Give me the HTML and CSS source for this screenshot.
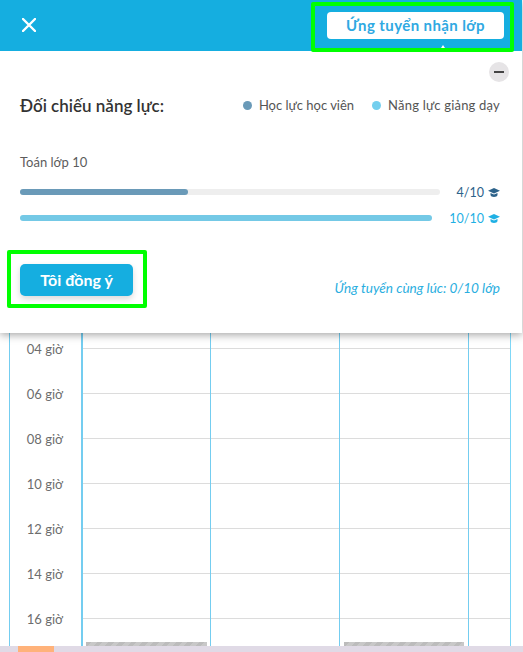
FILE: index.html
```html
<!DOCTYPE html>
<html lang="vi">
<head>
<meta charset="utf-8">
<title>Ứng tuyển nhận lớp</title>
<link rel="stylesheet" href="styles.css">
</head>
<body>
<div class="app">
  <main class="schedule">
    <div class="hours">
      <div class="hour">00 giờ</div><div class="hour">02 giờ</div><div class="hour">04 giờ</div><div class="hour">06 giờ</div><div class="hour">08 giờ</div><div class="hour">10 giờ</div><div class="hour">12 giờ</div><div class="hour">14 giờ</div><div class="hour">16 giờ</div>
    </div>
    <div class="day"><div class="slot"></div><div class="slot"></div><div class="slot"></div><div class="slot"></div><div class="slot"></div><div class="slot"></div><div class="slot"></div><div class="slot"></div><div class="slot"></div><div class="busy"></div></div>
    <div class="day"><div class="slot"></div><div class="slot"></div><div class="slot"></div><div class="slot"></div><div class="slot"></div><div class="slot"></div><div class="slot"></div><div class="slot"></div><div class="slot"></div></div>
    <div class="day"><div class="slot"></div><div class="slot"></div><div class="slot"></div><div class="slot"></div><div class="slot"></div><div class="slot"></div><div class="slot"></div><div class="slot"></div><div class="slot"></div><div class="busy busy-alt"></div></div>
    <div class="day day-last"><div class="slot"></div><div class="slot"></div><div class="slot"></div><div class="slot"></div><div class="slot"></div><div class="slot"></div><div class="slot"></div><div class="slot"></div><div class="slot"></div></div>
  </main>
  <footer class="strip"><span class="strip-mark"></span></footer>

  <section class="overlay">
    <header class="topbar">
      <svg class="close" viewBox="0 0 14 14" width="14" height="14"><path d="M1 1L13 13M13 1L1 13" stroke="#fff" stroke-width="2.4" stroke-linecap="round"/></svg>
      <button class="apply" type="button">Ứng tuyển nhận lớp</button>
    </header>
    <div class="panel">
      <div class="collapse-row"><span class="collapse"></span></div>
      <div class="heading">
        <h2 class="title">Đối chiếu năng lực:</h2>
        <div class="legend">
          <span class="legend-item"><i class="dot dot-student"></i>Học lực học viên</span>
          <span class="legend-item legend-item-wide"><i class="dot dot-teacher"></i>Năng lực giảng dạy</span>
        </div>
      </div>
      <div class="subject">Toán lớp 10</div>
      <div class="meter">
        <div class="track"><div class="fill fill-student" style="width:40%"></div></div>
        <span class="score score-student">4/10
          <svg class="cap" viewBox="0 0 24 18" width="12" height="9"><path fill="currentColor" d="M12 0L0 5.500 12 11l12-5.500zM5 10v4c0 2 3.500 4 7 4s7-2 7-4v-4l-7 3.200z"/></svg>
        </span>
      </div>
      <div class="meter">
        <div class="track track-full"><div class="fill fill-teacher" style="width:100%"></div></div>
        <span class="score score-teacher">10/10
          <svg class="cap" viewBox="0 0 24 18" width="12" height="9"><path fill="currentColor" d="M12 0L0 5.500 12 11l12-5.500zM5 10v4c0 2 3.500 4 7 4s7-2 7-4v-4l-7 3.200z"/></svg>
        </span>
      </div>
      <div class="actions">
        <button class="agree" type="button">Tôi đồng ý</button>
        <span class="quota">Ứng tuyển cùng lúc: 0/10 lớp</span>
      </div>
    </div>
  </section>

  <div class="mark mark-apply"></div>
  <div class="mark mark-agree"></div>
</div>
</body>
</html>
```
FILE: styles.css
```css
* { box-sizing: border-box; }
html, body { margin: 0; padding: 0; }
body {
  width: 523px;
  height: 652px;
  overflow: hidden;
  background: #fff;
  font-family: "Lato", "Noto Sans", sans-serif;
}
.app {
  position: relative;
  width: 523px;
  height: 652px;
  display: flex;
  flex-direction: column;
  overflow: hidden;
}
.schedule {
  flex: 1;
  min-height: 0;
  display: flex;
  align-items: stretch;
  margin-left: 9px;
  padding-top: 214px;
  overflow: hidden;
}
.hours {
  width: 72px;
  border-left: 1px solid #74cdf0;
  margin-top: -214px;
  padding-top: 214px;
}
.hour {
  height: 45px;
  display: flex;
  align-items: flex-end;
  justify-content: flex-end;
  padding-right: 18px;
  font-size: 13px;
  line-height: 18px;
  color: #6d6d6d;
  transform: translateY(9px);
}
.day {
  position: relative;
  width: 129px;
  margin-top: -214px;
  padding-top: 214px;
  border-left: 1px solid #74cdf0;
}
.hours + .day { border-left-width: 2px; }
.day-last {
  width: 43px;
  border-right: 1px solid #7fd7f7;
}
.slot {
  height: 45px;
  border-bottom: 1px solid #dcdcdc;
}
.busy {
  position: absolute;
  left: 3px;
  bottom: 0;
  width: 121px;
  height: 4px;
  background: repeating-linear-gradient(135deg, #bcbcbc 0 4px, #c8c8c8 4px 8px);
}
.busy-alt { left: 4px; width: 120px; }
.strip {
  flex: none;
  height: 6px;
  background: #e0dae6;
  padding-left: 18px;
}
.strip-mark {
  display: block;
  width: 36px;
  height: 6px;
  background: #ffb27a;
}
.overlay {
  position: absolute;
  left: 0;
  top: 0;
  width: 522px;
  box-shadow: 0 2px 8px rgba(0, 0, 0, .35);
}
.topbar {
  height: 51px;
  background: #15aee0;
  display: flex;
  align-items: center;
  justify-content: space-between;
  padding: 0 18px 0 22px;
  position: relative;
}
.topbar::after {
  content: "";
  position: absolute;
  left: 439px;
  bottom: 0;
  border-left: 4px solid transparent;
  border-right: 4px solid transparent;
  border-bottom: 6px solid #fff;
}
.close { display: block; margin-top: -2px; }
.apply {
  width: 177px;
  height: 27px;
  margin-top: -1px;
  border: 0;
  border-radius: 4px;
  background: #fff;
  color: #2fa9e2;
  font: 700 15px/27px "Lato", "Noto Sans", sans-serif;
  letter-spacing: .4px;
  padding: 0;
}
.panel {
  height: 282px;
  background: #fff;
  padding: 11px 22px 0 20px;
  display: flex;
  flex-direction: column;
}
.collapse-row { display: flex; justify-content: flex-end; margin-right: -9px; }
.collapse {
  position: relative;
  width: 20px;
  height: 20px;
  border-radius: 50%;
  background: #e6e4e6;
}
.collapse::after {
  content: "";
  position: absolute;
  left: 5px;
  top: 9px;
  width: 10px;
  height: 2px;
  background: #444;
}
.heading {
  display: flex;
  align-items: center;
  justify-content: space-between;
  margin-top: 11px;
  height: 24px;
}
.title {
  margin: 0;
  font-size: 17px;
  font-weight: 600;
  color: #333;
}
.legend { display: flex; gap: 18px; }
.legend-item {
  display: flex;
  align-items: center;
  font-size: 13px;
  color: #555;
}
.legend-item-wide { letter-spacing: .2px; }
.dot {
  width: 9px;
  height: 9px;
  border-radius: 50%;
  margin-right: 7px;
}
.dot-student { background: #6a9ab8; }
.dot-teacher { background: #74cfee; }
.subject {
  margin-top: 36px;
  font-size: 13px;
  line-height: 18px;
  color: #5c5c5c;
}
.meter {
  display: flex;
  align-items: center;
  justify-content: space-between;
  height: 26px;
}
.subject + .meter { margin-top: 8px; }
.track {
  width: 420px;
  height: 6px;
  border-radius: 3px;
  background: #eee;
}
.track-full { width: 412px; background: none; }
.fill { height: 100%; border-radius: 3px; }
.fill-student { background: #6a9ab8; }
.fill-teacher { background: #74c9e6; }
.score {
  display: flex;
  align-items: center;
  gap: 4px;
  font-size: 12.5px;
}
.score-student { color: #2c628a; }
.score-teacher { color: #1fb0e4; }
.cap { display: block; }
.actions {
  display: flex;
  align-items: center;
  justify-content: space-between;
  margin-top: 33px;
}
.agree {
  width: 113px;
  height: 32px;
  border: 0;
  border-radius: 5px;
  background: #15aee0;
  color: #fff;
  font: 700 16px/32px "Lato", "Noto Sans", sans-serif;
  padding: 0;
  box-shadow: 0 3px 6px rgba(0, 0, 0, .15);
}
.quota {
  margin-top: 16px;
  font-size: 13.6px;
  font-style: italic;
  color: #2aaee0;
}
.mark {
  position: absolute;
  border: 4px solid #00ff00;
  border-radius: 2px;
}
.mark-apply { left: 311px; top: 2px; width: 203px; height: 50px; }
.mark-agree { left: 7px; top: 250px; width: 140px; height: 58px; }
```
